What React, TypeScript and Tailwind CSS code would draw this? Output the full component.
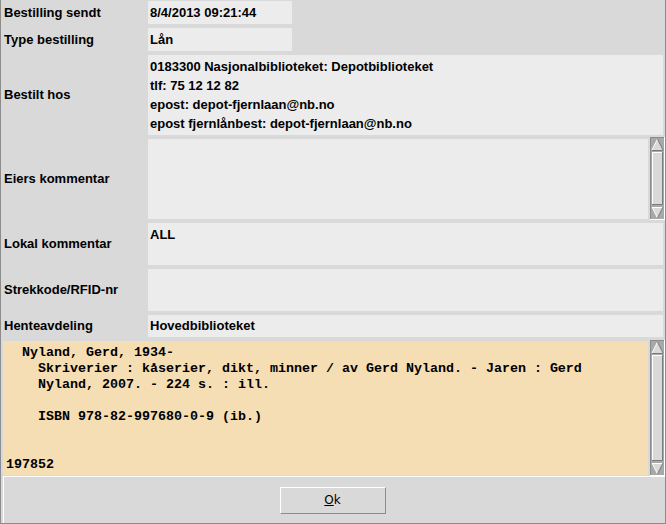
import type { ReactNode } from 'react';

const sans = 'font-["Liberation_Sans",Arial,sans-serif]';

function Scrollbar({ height }: { height: number }) {
  const h = height;
  return (
    <svg width={15} height={h} viewBox={`0 0 15 ${h}`} className="block shrink-0" shapeRendering="crispEdges">
      <rect x={0} y={0} width={15} height={h} fill="#a8a8a8" />
      <rect x={0} y={0} width={15} height={1} fill="#8a8a8a" />
      <rect x={0} y={0} width={1} height={h} fill="#8a8a8a" />
      <rect x={14} y={0} width={1} height={h} fill="#ffffff" />
      <rect x={0} y={h - 1} width={15} height={1} fill="#ffffff" />
      {/* up arrow */}
      <polygon points="7.5,2 2,13 13,13" fill="#d9d9d9" shapeRendering="auto" />
      <line x1={7.5} y1={2} x2={2} y2={13} stroke="#ffffff" strokeWidth={1} shapeRendering="auto" />
      <line x1={7.5} y1={2} x2={13} y2={13} stroke="#7a7a7a" strokeWidth={1} shapeRendering="auto" />
      <rect x={2} y={12.5} width={11} height={1} fill="#7a7a7a" />
      {/* thumb */}
      <rect x={2} y={15} width={11} height={h - 30} fill="#d9d9d9" />
      <rect x={2} y={15} width={11} height={1} fill="#ffffff" />
      <rect x={2} y={15} width={1} height={h - 30} fill="#ffffff" />
      <rect x={12} y={15} width={1} height={h - 30} fill="#7a7a7a" />
      <rect x={2} y={h - 16} width={11} height={1} fill="#7a7a7a" />
      {/* down arrow */}
      <polygon points={`2,${h - 13} 13,${h - 13} 7.5,${h - 2}`} fill="#d9d9d9" shapeRendering="auto" />
      <rect x={2} y={h - 13.5} width={11} height={1} fill="#ffffff" />
      <line x1={2} y1={h - 13} x2={7.5} y2={h - 2} stroke="#ffffff" strokeWidth={1} shapeRendering="auto" />
      <line x1={13} y1={h - 13} x2={7.5} y2={h - 2} stroke="#7a7a7a" strokeWidth={1} shapeRendering="auto" />
    </svg>
  );
}

function Label({ children }: { children: ReactNode }) {
  return <div className="flex items-center pl-[3px] font-bold">{children}</div>;
}

const record = `  Nyland, Gerd, 1934-
    Skriverier : kåserier, dikt, minner / av Gerd Nyland. - Jaren : Gerd
    Nyland, 2007. - 224 s. : ill.

    ISBN 978-82-997680-0-9 (ib.)


197852`;

export default function App() {
  return (
    <div
      className={`w-[666px] h-[524px] bg-[#d9d9d9] border-l border-r border-b border-[#8c8c8c] flex flex-col text-[13px] text-black ${sans}`}
    >
      {/* Fields */}
      <div className="grid grid-cols-[147px_1fr] gap-y-[4px] pt-px pr-[2px]">
        <Label>Bestilling sendt</Label>
        <div className="h-[23px] w-[144px] bg-[#ececec] flex items-center px-[2px] font-bold">8/4/2013 09:21:44</div>

        <Label>Type bestilling</Label>
        <div className="h-[23px] w-[144px] bg-[#ececec] flex items-center px-[2px] font-bold">Lån</div>

        <Label>Bestilt hos</Label>
        <div className="h-[80px] bg-[#ececec] px-[2px] pt-[2px] font-bold leading-[19px]">
          <div>0183300 Nasjonalbiblioteket: Depotbiblioteket</div>
          <div>tlf: 75 12 12 82</div>
          <div>epost: depot-fjernlaan@nb.no</div>
          <div>epost fjernlånbest: depot-fjernlaan@nb.no</div>
        </div>

        <Label>Eiers kommentar</Label>
        <div className="h-[80px] flex gap-[2px] -mr-[2px]">
          <div className="flex-1 bg-[#ececec]" />
          <div className="-my-[2px]">
            <Scrollbar height={83} />
          </div>
        </div>

        <Label>Lokal kommentar</Label>
        <div className="h-[42px] bg-[#ececec] px-[2px] pt-[2px] font-bold leading-[19px]">ALL</div>

        <Label>Strekkode/RFID-nr</Label>
        <div className="h-[42px] bg-[#ececec]" />

        <Label>Henteavdeling</Label>
        <div className="h-[22px] bg-[#ececec] flex items-center px-[2px] font-bold">Hovedbiblioteket</div>
      </div>

      {/* Record */}
      <div className="mt-[4px] flex gap-[2px] pl-[2px]">
        <pre className='flex-1 h-[134px] bg-[#f5deb3] pl-[3px] pt-[4px] font-["Liberation_Mono","Courier_New",monospace] font-bold text-[13.33px] leading-[16px] overflow-hidden'>
          {record}
        </pre>
        <div className="-mt-px">
          <Scrollbar height={136} />
        </div>
      </div>

      {/* Buttons */}
      <div className="flex-1 ml-[2px] pr-[4px] border-t border-l border-white flex items-center justify-center">
        <button
          type="button"
          className='w-[106px] h-[27px] bg-[#d9d9d9] border-t border-l border-white border-r border-b border-r-[#8c8c8c] border-b-[#8c8c8c] font-["DejaVu_Sans",sans-serif] text-[12px] text-black'
        >
          <span className="underline">O</span>k
        </button>
      </div>
    </div>
  );
}
